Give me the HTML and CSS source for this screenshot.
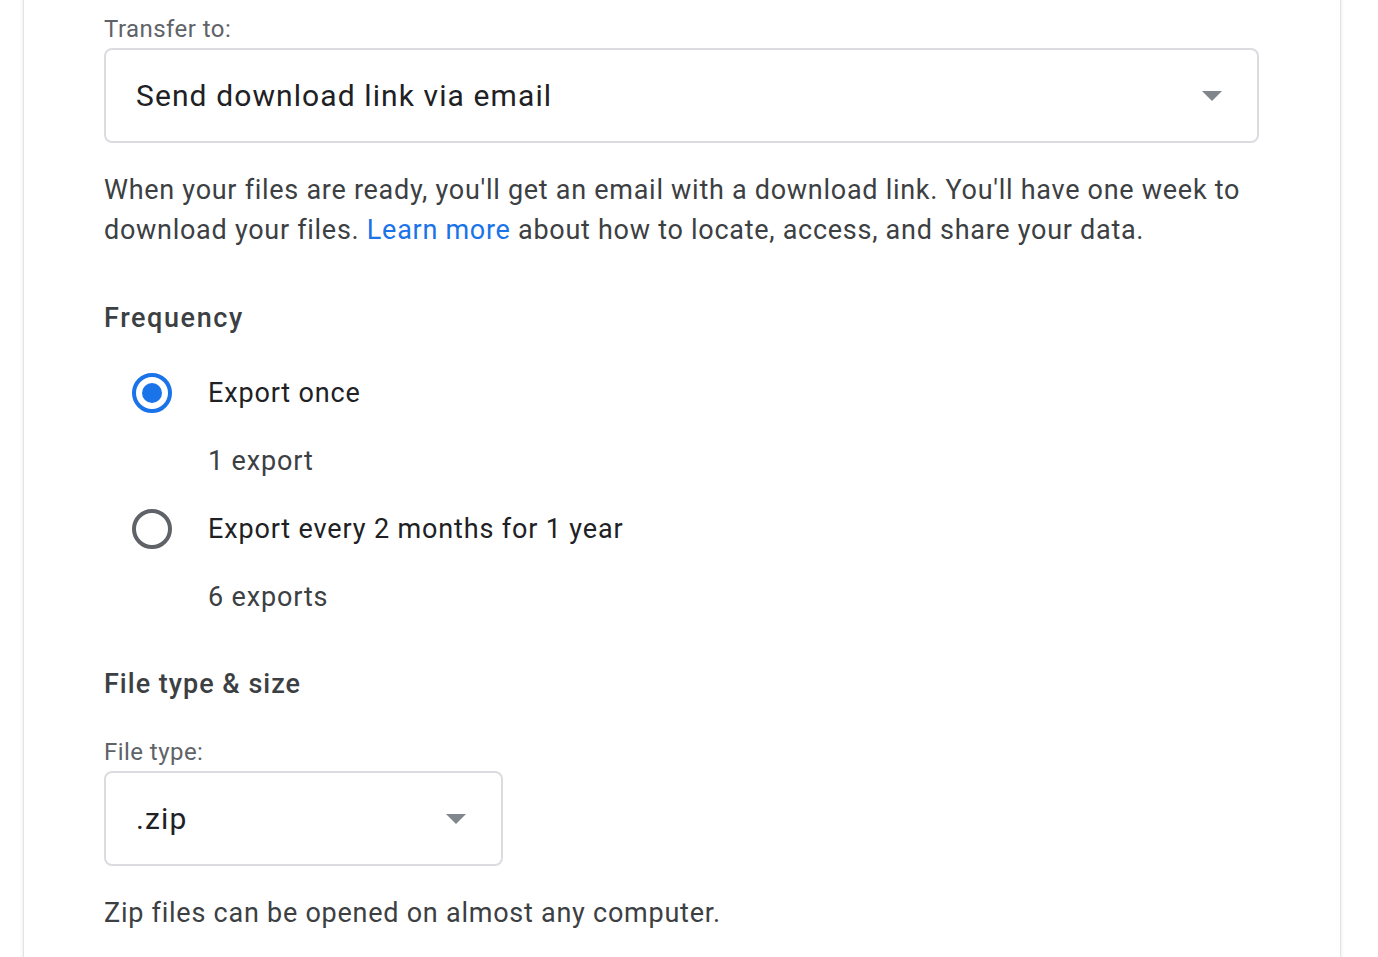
FILE: index.html
```html
<!DOCTYPE html>
<html lang="en">
<head>
<meta charset="utf-8">
<title>Takeout export settings</title>
<link rel="stylesheet" href="styles.css">
</head>
<body>
<main class="card">
  <div class="field-label">Transfer to:</div>
  <div class="select select-wide">
    <span class="select-value">Send download link via email</span>
    <span class="caret"></span>
  </div>
  <p class="help">When your files are ready, you'll get an email with a download link. You'll have one week to download your files. <a class="link" href="#">Learn more</a> about how to locate, access, and share your data.</p>

  <h2 class="section-title freq-title">Frequency</h2>
  <div class="radio-group">
    <div class="radio-row">
      <span class="radio radio-on"><span class="radio-dot"></span></span>
      <span class="radio-label">Export once</span>
    </div>
    <div class="radio-sub">1 export</div>
    <div class="radio-row">
      <span class="radio"></span>
      <span class="radio-label">Export every 2 months for 1 year</span>
    </div>
    <div class="radio-sub">6 exports</div>
  </div>

  <h2 class="section-title file-title">File type &amp; size</h2>
  <div class="field-label file-label">File type:</div>
  <div class="select select-narrow">
    <span class="select-value">.zip</span>
    <span class="caret"></span>
  </div>
  <p class="help zip-help">Zip files can be opened on almost any computer.</p>
</main>
</body>
</html>
```
FILE: styles.css
```css
html, body {
  margin: 0;
  padding: 0;
  background: #ffffff;
  overflow: hidden;
  height: 957px;
}
body {
  font-family: Roboto, "Liberation Sans", Arial, sans-serif;
  color: #3c4043;
}
.card {
  margin: -19px 0 0 24px;
  width: 1316px;
  box-sizing: border-box;
  padding: 30px 0 40px 80px;
  background: #fff;
  box-shadow: 0 0 0 1px #e3e3e3, 0 1px 5px rgba(60, 64, 67, 0.18);
  min-height: 1100px;
}
.field-label {
  font-size: 24px;
  line-height: 36px;
  color: #5f6368;
  letter-spacing: 0.45px;
  margin-bottom: 1px;
}
.select {
  box-sizing: border-box;
  height: 95px;
  border: 2px solid #dadce0;
  border-radius: 8px;
  display: flex;
  align-items: center;
  justify-content: space-between;
  padding: 0 35px 0 30px;
}
.select-wide { width: 1155px; }
.select-narrow { width: 399px; }
.select-value {
  font-size: 30px;
  color: #202124;
  line-height: 40px;
  letter-spacing: 1.1px;
}
.caret {
  width: 0;
  height: 0;
  border-left: 10px solid transparent;
  border-right: 10px solid transparent;
  border-top: 10px solid #80868b;
}
.help {
  margin: 27px 0 0;
  width: 1160px;
  font-size: 27px;
  line-height: 40px;
  color: #3c4043;
  letter-spacing: 0.72px;
}
.link {
  color: #1a73e8;
  text-decoration: none;
}
.section-title {
  margin: 0;
  font-size: 27px;
  font-weight: 500;
  line-height: 40px;
  color: #3c4043;
  letter-spacing: 1px;
}
.freq-title {
  margin-top: 48px;
  letter-spacing: 1.6px;
}
.radio-group {
  margin-top: 27px;
  display: flex;
  flex-direction: column;
  gap: 20px;
}
.radio-row {
  display: flex;
  align-items: center;
  height: 56px;
  padding-left: 28px;
}
.radio {
  box-sizing: border-box;
  width: 40px;
  height: 40px;
  border-radius: 50%;
  border: 4px solid #5f6368;
  display: flex;
  align-items: center;
  justify-content: center;
  flex: none;
}
.radio-on { border-color: #1a73e8; }
.radio-dot {
  width: 20px;
  height: 20px;
  border-radius: 50%;
  background: #1a73e8;
}
.radio-label {
  margin-left: 36px;
  font-size: 27px;
  line-height: 40px;
  color: #202124;
  letter-spacing: 0.85px;
}
.radio-sub {
  padding-left: 104px;
  font-size: 27px;
  line-height: 40px;
  color: #3c4043;
  letter-spacing: 0.85px;
}
.file-title { margin-top: 47px; }
.file-label { margin-top: 30px; }
.zip-help {
  margin-top: 27px;
  letter-spacing: 0.75px;
}
```
